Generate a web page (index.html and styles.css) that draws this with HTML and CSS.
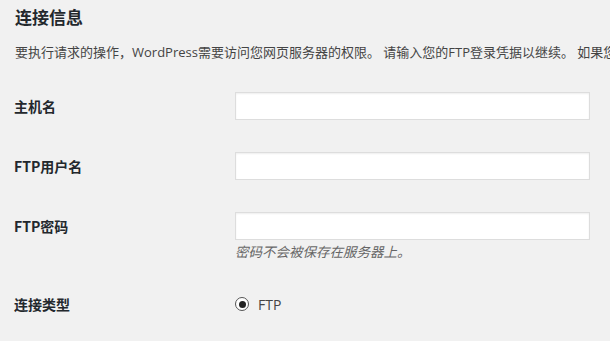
FILE: index.html
```html
<!DOCTYPE html>
<html lang="zh-CN">
<head>
<meta charset="utf-8">
<title>连接信息</title>
<link rel="stylesheet" href="styles.css">
</head>
<body>
<div class="wrap">
  <h2 class="title">连接信息</h2>
  <p class="intro">要执行请求的操作，WordPress需要访问您网页服务器的权限。 请输入您的FTP登录凭据以继续。 如果您忘记了您的登录凭据（如用户名、密码），请联系您的网站托管商。</p>
  <div class="form">
    <div class="row">
      <label class="label">主机名</label>
      <div class="field"><input class="text" type="text"></div>
    </div>
    <div class="row">
      <label class="label">FTP用户名</label>
      <div class="field"><input class="text" type="text"></div>
    </div>
    <div class="row">
      <label class="label">FTP密码</label>
      <div class="field">
        <input class="text" type="password">
        <div class="hint">密码不会被保存在服务器上。</div>
      </div>
    </div>
    <div class="row row-type">
      <label class="label">连接类型</label>
      <div class="field radio-line">
        <span class="radio"><span class="dot"></span></span>
        <span class="radio-text">FTP</span>
      </div>
    </div>
  </div>
</div>
</body>
</html>
```

FILE: styles.css
```css
html, body {
  margin: 0;
  padding: 0;
  background: #f1f1f1;
  overflow: hidden;
}
body {
  font-family: "Open Sans", "Noto Sans CJK SC", sans-serif;
  color: #444;
}
.wrap {
  padding-left: 15px;
  width: 900px;
}
.title {
  margin: 0;
  padding-top: 5px;
  font-size: 17px;
  line-height: 24px;
  font-weight: 700;
  color: #23282d;
  font-family: "Noto Sans CJK SC", sans-serif;
}
.intro {
  margin: 13px 0 0;
  font-size: 13px;
  line-height: 20px;
  white-space: nowrap;
  color: #444;
}
.form {
  margin-top: 30px;
  display: flex;
  flex-direction: column;
  gap: 32px;
}
.row {
  display: grid;
  grid-template-columns: 220px 355px;
  align-items: start;
}
.row-type {
  margin-top: -3px;
}
.label {
  margin-left: -1px;
  font-size: 14px;
  line-height: 28px;
  font-weight: 700;
  color: #23282d;
  font-family: "Noto Sans CJK SC", sans-serif;
}
.text {
  display: block;
  box-sizing: border-box;
  width: 355px;
  height: 28px;
  margin: 0;
  padding: 3px 5px;
  border: 1px solid #ddd;
  background: #fff;
  box-shadow: inset 0 1px 2px rgba(0, 0, 0, 0.07);
  outline: none;
}
.hint {
  margin-top: 1px;
  font-size: 13.5px;
  line-height: 20px;
  font-style: italic;
  color: #666;
  font-family: "Noto Sans CJK SC", sans-serif;
}
.radio-line {
  display: flex;
  align-items: center;
  height: 28px;
  gap: 9px;
}
.radio {
  box-sizing: border-box;
  width: 14px;
  height: 14px;
  border: 1px solid #555;
  border-radius: 50%;
  background: #fff;
  display: flex;
  align-items: center;
  justify-content: center;
}
.dot {
  width: 7px;
  height: 7px;
  border-radius: 50%;
  background: #222;
}
.radio-text {
  font-size: 14px;
  color: #444;
}
```
